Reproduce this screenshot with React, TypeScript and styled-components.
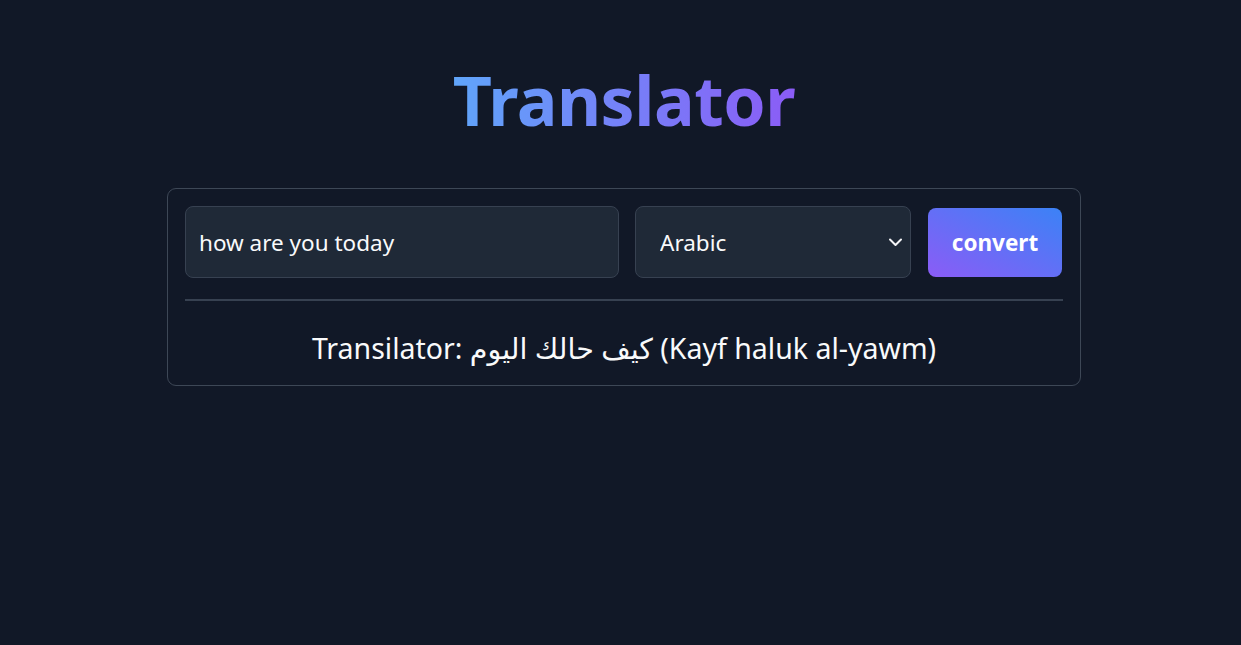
import React, { useState } from "react";
import styled, { createGlobalStyle } from "styled-components";

const Global = createGlobalStyle`
  html, body { margin: 0; padding: 0; background: #111827; }
  body { font-family: "Noto Sans", "Open Sans", "DejaVu Sans", sans-serif; color: #f9fafb; }
  * { box-sizing: border-box; }
`;

const Page = styled.main`
  min-height: 645px;
  display: flex;
  flex-direction: column;
  align-items: center;
  padding-top: 58px;
  padding-left: 7px;
`;

const Title = styled.h1`
  margin: 0;
  font-size: 68px;
  line-height: 84px;
  font-weight: 700;
  letter-spacing: -0.5px;
  background: linear-gradient(90deg, #60a5fa, #8b5cf6);
  -webkit-background-clip: text;
  background-clip: text;
  color: transparent;
`;

const Card = styled.section`
  margin-top: 46px;
  width: 914px;
  border: 1px solid #3d4756;
  border-radius: 9px;
  padding: 17px 17px 18px;
  display: flex;
  flex-direction: column;
`;

const Row = styled.div`
  display: flex;
  align-items: center;
  gap: 16px;
  padding-bottom: 21px;
  border-bottom: 2px solid #374151;
`;

const TextInput = styled.input`
  flex: 1;
  min-width: 0;
  height: 72px;
  background: #1f2937;
  border: 1px solid #374151;
  border-radius: 8px;
  padding: 0 13px;
  font-family: inherit;
  font-size: 22.5px;
  color: #f9fafb;
  outline: none;
`;

const SelectWrap = styled.div`
  position: relative;
  width: 276px;
`;

const Select = styled.select`
  appearance: none;
  width: 100%;
  height: 72px;
  background: #1f2937;
  border: 1px solid #374151;
  border-radius: 8px;
  padding: 0 24px;
  font-family: inherit;
  font-size: 22.5px;
  color: #f9fafb;
  outline: none;
`;

const Chevron = styled.svg`
  position: absolute;
  right: 8px;
  top: 50%;
  transform: translateY(-50%);
  pointer-events: none;
`;

const Button = styled.button`
  width: 134px;
  height: 69px;
  margin: 0 1px;
  border: none;
  border-radius: 8px;
  background: linear-gradient(to top right, #8b5cf6, #3b82f6);
  color: #ffffff;
  font-family: inherit;
  font-size: 22.5px;
  font-weight: 700;
  cursor: pointer;
`;

const Result = styled.p`
  margin: 0;
  padding-top: 28px;
  text-align: center;
  font-size: 28.5px;
  line-height: 38px;
  color: #f9fafb;
`;

export default function App() {
  const [text, setText] = useState("how are you today");
  const [lang, setLang] = useState("Arabic");
  return (
    <>
      <Global />
      <Page>
        <Title>Translator</Title>
        <Card>
          <Row>
            <TextInput value={text} onChange={(e) => setText(e.target.value)} />
            <SelectWrap>
              <Select value={lang} onChange={(e) => setLang(e.target.value)}>
                <option>Arabic</option>
                <option>French</option>
                <option>Spanish</option>
              </Select>
              <Chevron width="15" height="14" viewBox="0 0 15 14" fill="none">
                <path d="M2 4.5l5.5 5.5L13 4.5" stroke="#f3f4f6" strokeWidth="2" strokeLinecap="round" strokeLinejoin="round" />
              </Chevron>
            </SelectWrap>
            <Button>convert</Button>
          </Row>
          <Result>Transilator: كيف حالك اليوم (Kayf haluk al-yawm)</Result>
        </Card>
      </Page>
    </>
  );
}
